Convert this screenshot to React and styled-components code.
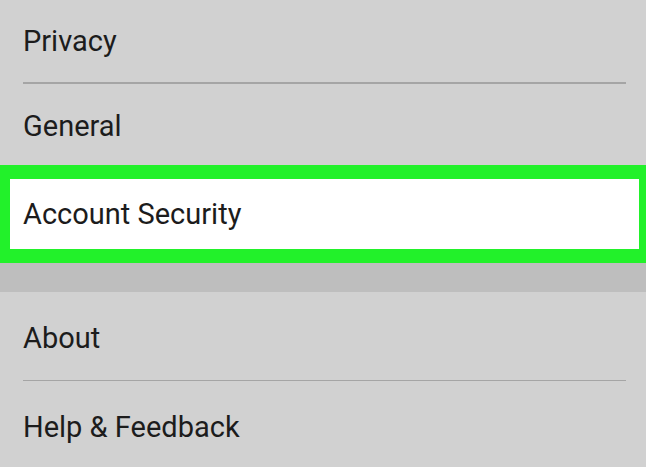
import React from 'react'
import styled, { createGlobalStyle } from 'styled-components'

const GlobalStyle = createGlobalStyle`
  html, body {
    margin: 0;
    padding: 0;
    background: #d1d1d1;
  }
`

const Page = styled.div`
  width: 646px;
  height: 467px;
  overflow: hidden;
  background: #d1d1d1;
  font-family: Roboto, "Liberation Sans", sans-serif;
  color: #1c1c1c;
  display: flex;
  flex-direction: column;
`

const Group = styled.div`
  display: flex;
  flex-direction: column;
`

const Row = styled.div`
  display: flex;
  align-items: center;
  height: ${p => p.h}px;
  padding: ${p => p.pt || 0}px 20px 0 23px;
  box-sizing: border-box;
  font-size: 29px;
`

const Divider = styled.div`
  height: 1.5px;
  margin: 0 20px 0 23px;
  background: #a5a5a5;
`

const Highlight = styled.div`
  background: #22f12a;
  padding: 14px 7px 14px 10px;
`

const Selected = styled.div`
  background: #ffffff;
  height: 70px;
  display: flex;
  align-items: center;
  padding-left: 13px;
  font-size: 29px;
`

const SectionGap = styled.div`
  height: 31px;
  background: #bebebe;
`

export default function App() {
  return (
    <Page>
      <GlobalStyle />
      <Group>
        <Row h={82}>Privacy</Row>
        <Divider />
        <Row h={81} pt={4}>General</Row>
        <Highlight>
          <Selected>Account Security</Selected>
        </Highlight>
      </Group>
      <SectionGap />
      <Group>
        <Row h={88} pt={4}>About</Row>
        <Divider />
        <Row h={86} pt={6}>Help &amp; Feedback</Row>
      </Group>
    </Page>
  )
}
